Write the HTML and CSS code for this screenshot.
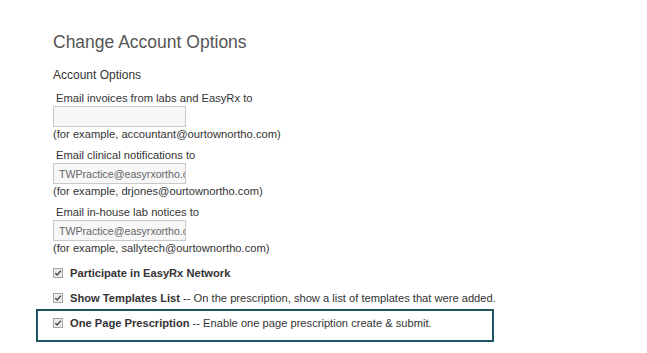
FILE: index.html
```html
<!DOCTYPE html>
<html>
<head>
<meta charset="utf-8">
<link rel="stylesheet" href="styles.css">
</head>
<body>
<div class="page">
  <h1 class="title">Change Account Options</h1>
  <h2 class="section">Account Options</h2>
  <div class="fields">
    <div class="field">
      <label class="field-label">Email invoices from labs and EasyRx to</label>
      <input class="field-input" type="text" value="">
      <div class="field-hint">(for example, accountant@ourtownortho.com)</div>
    </div>
    <div class="field">
      <label class="field-label">Email clinical notifications to</label>
      <input class="field-input" type="text" value="TWPractice@easyrxortho.com">
      <div class="field-hint">(for example, drjones@ourtownortho.com)</div>
    </div>
    <div class="field">
      <label class="field-label">Email in-house lab notices to</label>
      <input class="field-input" type="text" value="TWPractice@easyrxortho.com">
      <div class="field-hint">(for example, sallytech@ourtownortho.com)</div>
    </div>
  </div>
  <div class="options">
    <div class="option">
      <svg class="check" width="10" height="10" viewBox="0 0 10 10"><rect x="0.5" y="0.5" width="9" height="9" fill="#ececec" stroke="#a3a3a3"/><path d="M2.3 5.1 L4.2 7 L7.8 2.8" fill="none" stroke="#4d4d4d" stroke-width="1.5"/></svg>
      <span><b>Participate in EasyRx Network</b></span>
    </div>
    <div class="option">
      <svg class="check" width="10" height="10" viewBox="0 0 10 10"><rect x="0.5" y="0.5" width="9" height="9" fill="#ececec" stroke="#a3a3a3"/><path d="M2.3 5.1 L4.2 7 L7.8 2.8" fill="none" stroke="#4d4d4d" stroke-width="1.5"/></svg>
      <span><b>Show Templates List</b> -- On the prescription, show a list of templates that were added.</span>
    </div>
    <div class="option-box">
      <div class="option">
        <svg class="check" width="10" height="10" viewBox="0 0 10 10"><rect x="0.5" y="0.5" width="9" height="9" fill="#ececec" stroke="#a3a3a3"/><path d="M2.3 5.1 L4.2 7 L7.8 2.8" fill="none" stroke="#4d4d4d" stroke-width="1.5"/></svg>
        <span><b>One Page Prescription</b> -- Enable one page prescription create &amp; submit.</span>
      </div>
    </div>
  </div>
</div>
</body>
</html>
```
FILE: styles.css
```css
body {
  margin: 0;
  background: #fff;
  font-family: "Liberation Sans", Arial, sans-serif;
  color: #333;
}
.page {
  padding: 32px 0 0 53px;
}
.title {
  margin: 0;
  font-size: 17.5px;
  line-height: 21px;
  font-weight: normal;
  color: #555;
}
.section {
  margin: 15px 0 0;
  font-size: 12px;
  line-height: 14px;
  font-weight: normal;
  color: #333;
}
.fields {
  display: flex;
  flex-direction: column;
  gap: 7px;
  margin-top: 9px;
}
.field {
  display: flex;
  flex-direction: column;
  align-items: flex-start;
}
.field-label {
  font-size: 11.2px;
  line-height: 14px;
  padding-left: 3px;
}
.field-input {
  box-sizing: border-box;
  width: 133px;
  height: 21px;
  margin: 1px 0 0;
  border: 1px solid #c9c9c9;
  background: #f7f7f7;
  padding: 0 0 0 5px;
  font: 10.6px "Liberation Sans", Arial, sans-serif;
  color: #666;
  outline: none;
}
.field-hint {
  font-size: 11.2px;
  line-height: 14px;
}
.options {
  display: flex;
  flex-direction: column;
  margin-top: 10px;
}
.option {
  display: flex;
  align-items: center;
  height: 16px;
  font-size: 11.15px;
  margin-bottom: 9px;
}
.option b {
  font-weight: bold;
}
.check {
  flex: none;
  margin-right: 7px;
}
.option-box {
  box-sizing: border-box;
  width: 458px;
  margin: -6px 0 0 -17px;
  border: 2px solid #1f5461;
  padding: 4px 0 9px 15px;
}
.option-box .option {
  margin-bottom: 0;
}
```
